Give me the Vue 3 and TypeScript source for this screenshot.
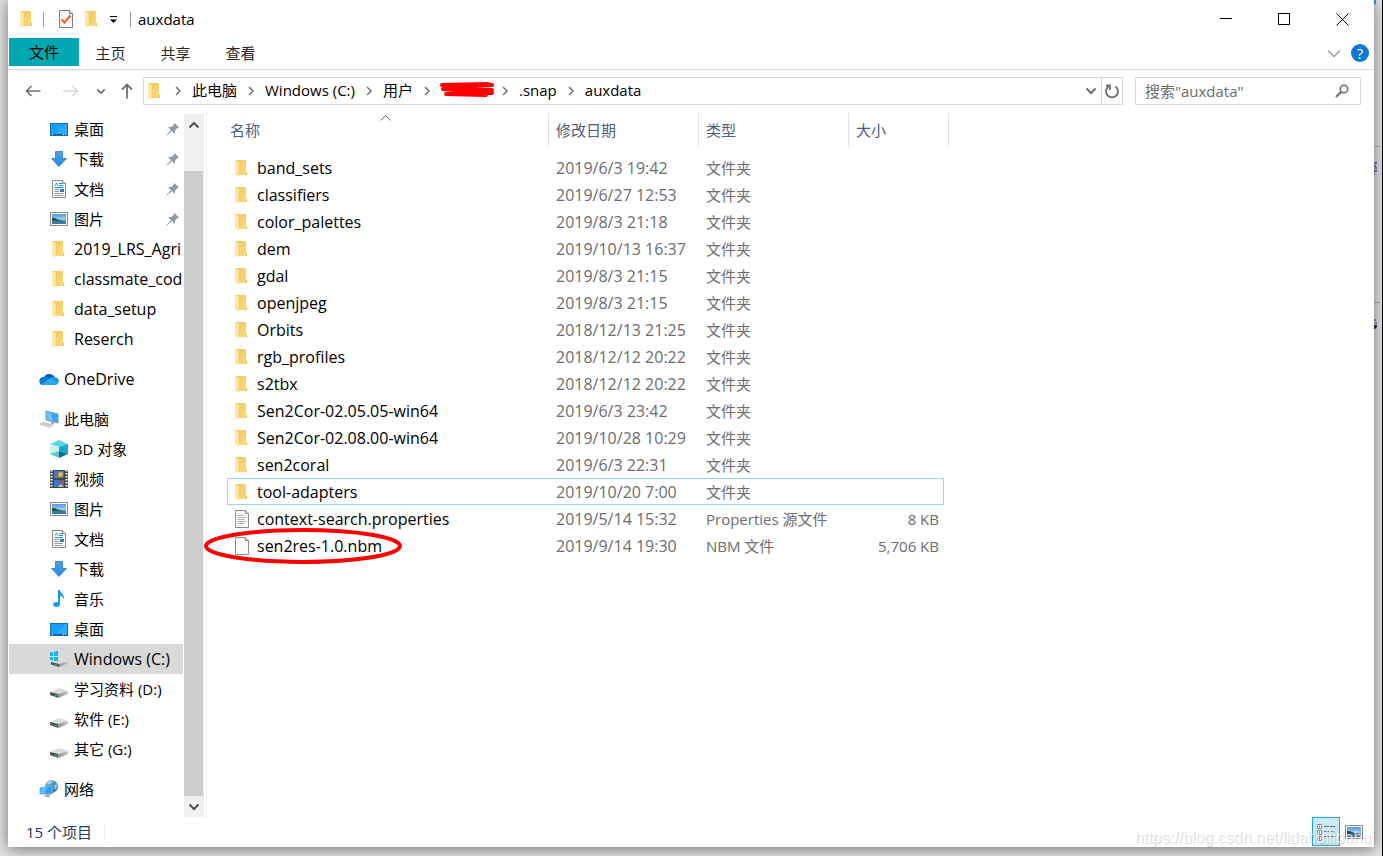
<script setup lang="ts">
import { ref } from 'vue'

interface NavItem {
  label: string
  icon: string
  pinned?: boolean
  active?: boolean
}

interface NavGroup {
  root?: NavItem
  items: NavItem[]
}

interface FileRow {
  name: string
  icon: string
  date: string
  type: string
  size?: string
  focused?: boolean
  circled?: boolean
}

const query = ref('')

const tabs = ['主页', '共享', '查看']

const crumbs = ['此电脑', 'Windows (C:)', '用户', '', '.snap', 'auxdata']

const groups: NavGroup[] = [
  {
    items: [
      { label: '桌面', icon: 'desktop', pinned: true },
      { label: '下载', icon: 'download', pinned: true },
      { label: '文档', icon: 'document', pinned: true },
      { label: '图片', icon: 'picture', pinned: true },
      { label: '2019_LRS_Agri', icon: 'folder' },
      { label: 'classmate_code', icon: 'folder' },
      { label: 'data_setup', icon: 'folder' },
      { label: 'Reserch', icon: 'folder' },
    ],
  },
  { root: { label: 'OneDrive', icon: 'cloud' }, items: [] },
  {
    root: { label: '此电脑', icon: 'computer' },
    items: [
      { label: '3D 对象', icon: 'cube' },
      { label: '视频', icon: 'video' },
      { label: '图片', icon: 'picture' },
      { label: '文档', icon: 'document' },
      { label: '下载', icon: 'download' },
      { label: '音乐', icon: 'music' },
      { label: '桌面', icon: 'desktop' },
      { label: 'Windows (C:)', icon: 'windrive', active: true },
      { label: '学习资料 (D:)', icon: 'drive' },
      { label: '软件 (E:)', icon: 'drive' },
      { label: '其它 (G:)', icon: 'drive' },
    ],
  },
  { root: { label: '网络', icon: 'network' }, items: [] },
]

// Latin-only labels are set one pixel larger than Chinese ones.
const isLatin = (s: string): boolean => !/[\u4e00-\u9fff]/.test(s)

const folder = (name: string, date: string, focused = false): FileRow => ({
  name,
  date,
  icon: 'folder',
  type: '文件夹',
  focused,
})

const files: FileRow[] = [
  folder('band_sets', '2019/6/3 19:42'),
  folder('classifiers', '2019/6/27 12:53'),
  folder('color_palettes', '2019/8/3 21:18'),
  folder('dem', '2019/10/13 16:37'),
  folder('gdal', '2019/8/3 21:15'),
  folder('openjpeg', '2019/8/3 21:15'),
  folder('Orbits', '2018/12/13 21:25'),
  folder('rgb_profiles', '2018/12/12 20:22'),
  folder('s2tbx', '2018/12/12 20:22'),
  folder('Sen2Cor-02.05.05-win64', '2019/6/3 23:42'),
  folder('Sen2Cor-02.08.00-win64', '2019/10/28 10:29'),
  folder('sen2coral', '2019/6/3 22:31'),
  folder('tool-adapters', '2019/10/20 7:00', true),
  { name: 'context-search.properties', icon: 'textfile', date: '2019/5/14 15:32', type: 'Properties 源文件', size: '8 KB' },
  { name: 'sen2res-1.0.nbm', icon: 'blankfile', date: '2019/9/14 19:30', type: 'NBM 文件', size: '5,706 KB', circled: true },
]
</script>

<template>
  <div class="screen">
    <svg class="defs" aria-hidden="true">
      <defs>
        <linearGradient id="g-folder" x1="0" y1="0" x2="1" y2="1">
          <stop offset="0" stop-color="#efc75c" />
          <stop offset="1" stop-color="#fbdb80" />
        </linearGradient>
        <linearGradient id="g-sky" x1="0" y1="0" x2="0" y2="1">
          <stop offset="0" stop-color="#4f9be8" />
          <stop offset="1" stop-color="#e4f3fb" />
        </linearGradient>
        <linearGradient id="g-drive" x1="0" y1="0" x2="1" y2="0">
          <stop offset="0" stop-color="#8d8f91" />
          <stop offset="1" stop-color="#c9cbcd" />
        </linearGradient>
        <linearGradient id="g-arrow" x1="0" y1="0" x2="0" y2="1">
          <stop offset="0" stop-color="#4ba2e8" />
          <stop offset="1" stop-color="#2487dc" />
        </linearGradient>
        <linearGradient id="g-globe" x1="0" y1="0" x2="1" y2="1">
          <stop offset="0" stop-color="#7fc0de" />
          <stop offset="1" stop-color="#256f9e" />
        </linearGradient>

        <symbol id="i-folder" viewBox="0 0 18 18">
          <path d="M3 1h10v12h1v3H3z" fill="url(#g-folder)" />
          <path d="M13 12.500l1 .5v3h-1z" fill="#e9c35d" />
          <path d="M2 1l4 2v13l-1.500 1.500L2 15.500z" fill="#ffe8a6" />
          <path d="M6 3v13" stroke="#efcb70" stroke-width=".6" />
        </symbol>
        <symbol id="i-desktop" viewBox="0 0 18 18">
          <rect x=".5" y="3.500" width="17" height="12" fill="#18a0fb" stroke="#0f6db5" />
          <path d="M6 14L16 4h1v10z" fill="#3fb2ff" opacity=".6" />
          <path d="M1 14.500h16" stroke="#0a5c9e" />
          <path d="M2 14.500h1M13 14.500h1M15 14.500h1" stroke="#fff" />
        </symbol>
        <symbol id="i-download" viewBox="0 0 18 18">
          <path d="M5.500 1.500h7v7h4L9 16.500 1.500 8.500h4z" fill="url(#g-arrow)" stroke="#2b7cc4" stroke-width=".8" />
        </symbol>
        <symbol id="i-document" viewBox="0 0 18 18">
          <path d="M2.500.5h10l3 3v14h-13z" fill="#fff" stroke="#8a8a8a" />
          <path d="M12.500.5v3h3" fill="#e8e8e8" stroke="#8a8a8a" />
          <path d="M5 5.500l1.500-2.500L8 5.500M9 3.500h3M9 5.500h4M4.500 7.500H13" fill="none" stroke="#1f8fdc" />
          <path d="M4.500 9.500H9M4.500 11.500H9M4.500 13.500H13M4.500 15.500H13" stroke="#9a9a9a" />
          <rect x="10" y="9" width="4" height="3" fill="#2e7fc0" />
        </symbol>
        <symbol id="i-picture" viewBox="0 0 18 18">
          <rect x=".5" y="2.500" width="17" height="13" fill="#fff" stroke="#8d8d8d" />
          <rect x="2" y="4" width="14" height="10" fill="url(#g-sky)" />
          <path d="M2 8c3-1 4 1 6 1.500s5 1 8 1V12H2z" fill="#376f52" />
          <path d="M2 11.500c5-1 9 0 14-.5v3H2z" fill="#3c78a8" />
          <path d="M2 8l3 .5 4 2H2z" fill="#244c40" />
        </symbol>
        <symbol id="i-cloud" viewBox="0 0 20 20">
          <path d="M5 8a6 5.500 0 0 1 10.500-.5L15 12H5z" fill="#0a5cb4" />
          <path d="M1 14.500C-1 11 1.500 7.500 5 8c2-.8 4 0 5.500 1.500L6 16H4c-1.500 0-2.500-.5-3-1.500z" fill="#0f78d4" />
          <path d="M10 9.500c1.500-2 4-2.500 6-1 3 0 4.500 2.500 3.500 5z" fill="#1490df" />
          <path d="M2 15.500L10 10c1-.6 2-.5 3 0l6.500 3.500c-.3 1.600-1.500 2.500-3.500 2.500H4c-.8 0-1.500-.2-2-.5z" fill="#28a8ea" />
        </symbol>
        <symbol id="i-computer" viewBox="0 0 20 20">
          <path d="M7 2l12 3v9L7 11z" fill="#3aa5ee" stroke="#8296a5" />
          <path d="M7.500 2.700l4.500 1.100 2 8.400-6.500-1.600z" fill="#69c2fa" />
          <path d="M12 13l3 .8v1.700l-3-.8z" fill="#9aa3aa" />
          <path d="M1 15l3-1.500 10 2.500-3 2.500z" fill="#dfe3e6" stroke="#a9b1b7" stroke-width=".7" />
          <path d="M3.500 15l8 2M5 14.300l7 2" stroke="#b9c0c5" stroke-width=".6" />
        </symbol>
        <symbol id="i-cube" viewBox="0 0 18 18">
          <path d="M0 4l9-4 9 4-9 3z" fill="#5fd5e2" />
          <path d="M0 4l9 3v5l-9 2z" fill="#c9f3f2" />
          <path d="M0 14l9-3v7z" fill="#5cc7cf" />
          <path d="M9 7l9-3v10l-9-3z" fill="#16a9cc" />
          <path d="M9 11l9 3-9 4z" fill="#0d6f86" />
        </symbol>
        <symbol id="i-video" viewBox="0 0 18 18">
          <rect width="18" height="18" fill="#454545" />
          <path d="M1.500 0v18M16.500 0v18" stroke="#fff" stroke-width="2" stroke-dasharray="1.500 1.500" />
          <rect x="4" y="1" width="10" height="7.500" fill="#3b78d8" />
          <rect x="4" y="9.500" width="10" height="7.500" fill="#3b78d8" />
          <circle cx="10.500" cy="4.500" r="2.500" fill="#f3b61f" />
          <circle cx="6.500" cy="7" r="1.500" fill="#d94b9b" />
          <path d="M5 8.500l3-2 5 2z" fill="#49a942" />
          <circle cx="11" cy="11" r="1.800" fill="#d63a2e" />
          <path d="M8 17l3-3 2 3z" fill="#f5c93c" />
          <path d="M4 9h10" stroke="#2a2a2a" />
        </symbol>
        <symbol id="i-music" viewBox="0 0 18 18">
          <ellipse cx="6.500" cy="14.500" rx="3.300" ry="2.500" fill="#0f9bf3" />
          <path d="M8 0h2c0 3.500 5 4 4 9.500-.8-2.500-2-3.500-4-4V15H8z" fill="#0f9bf3" />
        </symbol>
        <symbol id="i-drive" viewBox="0 0 18 18">
          <path d="M0 12l9-4 9 3-8 3.500z" fill="#dcdde0" />
          <path d="M0 12l8.500 2V18L0 15z" fill="#4d5052" />
          <path d="M8.500 14L18 11v3l-9.500 4z" fill="url(#g-drive)" />
          <path d="M5 15l2 .6" stroke="#37d046" stroke-width="1.200" />
        </symbol>
        <symbol id="i-windrive" viewBox="0 0 18 18">
          <path d="M1 12l9-4 8 3-8 3z" fill="#dcdde0" />
          <path d="M1 12l8 2v3l-8-2.500z" fill="#4d5052" />
          <path d="M9 14l9-3v2.500L9 17z" fill="url(#g-drive)" />
          <path d="M5 14.500l2 .5" stroke="#37d046" stroke-width="1.200" />
          <path d="M0 2.500l3-.5v4H0zM4 1.800L8 1v5H4zM0 7h3v3.500L0 10zM4 7h4v4.500l-4-.8z" fill="#12b5ee" />
        </symbol>
        <symbol id="i-network" viewBox="0 0 20 20">
          <circle cx="12.500" cy="7.500" r="6.500" fill="url(#g-globe)" />
          <path d="M8 4c2-2 4-2.500 6-2L12 4.500 9 5.500zM15 6l3-.5c.5 2-.5 4-2 5z" fill="#b5dcec" opacity=".8" />
          <path d="M1 9l12-2v8L1 15z" fill="#2f9fee" stroke="#5fb0e6" />
          <path d="M1.500 9.500l7-1.200-3 6.200h-4z" fill="#5dbcf9" />
          <path d="M6 15.500h4l1.500 1.500-2 1.500-4-1z" fill="#aab1b6" />
        </symbol>
        <symbol id="i-blankfile" viewBox="0 0 18 18">
          <path d="M2.500.5h10l3 3v14h-13z" fill="#fafafa" stroke="#8c8c8c" />
          <path d="M12.500.5v3h3" fill="#e6e6e6" stroke="#8c8c8c" />
        </symbol>
        <symbol id="i-textfile" viewBox="0 0 18 18">
          <path d="M2.500.5h10l3 3v14h-13z" fill="#fafafa" stroke="#8c8c8c" />
          <path d="M12.500.5v3h3" fill="#e6e6e6" stroke="#8c8c8c" />
          <path d="M4.500 5.500H11M4.500 7.500h9M4.500 9.500h7M4.500 11.500h9M4.500 13.500h7" stroke="#b0b0b0" />
        </symbol>
        <symbol id="i-check" viewBox="0 0 18 18">
          <path d="M2.500.5h10l3 3v14h-13z" fill="#f6f6f6" stroke="#7d7d7d" />
          <path d="M12.500.5v3h3" fill="#e6e6e6" stroke="#7d7d7d" />
          <path d="M4.500 9.500l3 3 6-7" fill="none" stroke="#f0621f" stroke-width="2" />
        </symbol>
        <symbol id="i-pin" viewBox="0 0 14 14">
          <path d="M8.500 1L13 5.500l-1.500.5-2.500 2.500L9 12 6 9 1 13.500.5 13 5 8 2 5l3.500 0L8 2.500z" fill="#8e9ba6" />
        </symbol>
        <symbol id="i-right" viewBox="0 0 8 10">
          <path d="M2 1l4 4-4 4" fill="none" stroke="#757575" stroke-width="1.500" />
        </symbol>
        <symbol id="i-down" viewBox="0 0 12 8">
          <path d="M1.500 1.500L6 6l4.500-4.500" fill="none" stroke="currentColor" stroke-width="2" />
        </symbol>
      </defs>
    </svg>

    <svg class="backdrop" viewBox="0 0 9 340" aria-hidden="true">
      <path d="M0 0h2v3L1 5H0z" fill="#2f7fd6" />
      <path d="M0 146.500h6M0 302.500h6" stroke="#8d8d8d" />
      <path d="M0 163h3M0 166h2M1 168h2M0 171h3M0 174h1M0 320h2M1 323h2" stroke="#5c5a94" stroke-width="2" />
      <path d="M0 325h3v2l-2 2H0z" fill="#22223c" />
    </svg>

    <main class="window">
      <header class="titlebar">
        <svg class="icon"><use href="#i-folder" /></svg>
        <span class="rule"></span>
        <button class="quick check" type="button" aria-label="属性"><svg class="icon"><use href="#i-check" /></svg></button>
        <button class="quick" type="button" aria-label="新建文件夹"><svg class="icon"><use href="#i-folder" /></svg></button>
        <button class="quick more" type="button" aria-label="自定义快速访问工具栏">
          <svg width="7" height="8" viewBox="0 0 7 8"><path d="M0 .5h7" stroke="#000" /><path d="M0 3.500h7L3.500 7z" /></svg>
        </button>
        <span class="rule"></span>
        <h1>auxdata</h1>
        <div class="controls">
          <button type="button" aria-label="最小化"><svg viewBox="0 0 13 13"><path d="M0 5.500h12" /></svg></button>
          <button type="button" aria-label="最大化"><svg viewBox="0 0 13 13"><path d="M.5.5h11v11H.5z" /></svg></button>
          <button type="button" aria-label="关闭"><svg viewBox="0 0 13 13"><path d="M.5.5l12 12M12.500.5l-12 12" /></svg></button>
        </div>
      </header>

      <nav class="ribbon" aria-label="功能区">
        <button class="tab file" type="button">文件</button>
        <button v-for="t in tabs" :key="t" class="tab" type="button">{{ t }}</button>
        <button class="expand" type="button" aria-label="展开功能区">
          <svg width="14" height="9" viewBox="0 0 14 9"><path d="M1 1.500L7 7.500l6-6" fill="none" stroke="#9a9a9a" stroke-width="1.300" /></svg>
        </button>
        <button class="help" type="button" aria-label="帮助">?</button>
      </nav>

      <div class="addressbar">
        <div class="history">
          <button type="button" aria-label="后退">
            <svg width="16" height="12" viewBox="0 0 16 12"><path d="M15.500 6H1.500M6.500 1l-5 5 5 5" fill="none" stroke="#6e6e6e" stroke-width="1.600" /></svg>
          </button>
          <button type="button" aria-label="前进" disabled>
            <svg width="16" height="12" viewBox="0 0 16 12"><path d="M0 6h14.500M9.500 1l5 5-5 5" fill="none" stroke="#d9d9d9" stroke-width="1.600" /></svg>
          </button>
          <button class="recent" type="button" aria-label="最近浏览的位置">
            <svg width="10" height="7"><use href="#i-down" /></svg>
          </button>
          <button class="up" type="button" aria-label="上移">
            <svg width="12" height="16" viewBox="0 0 12 16"><path d="M6 15.500V1.500M1 6.500l5-5 5 5" fill="none" stroke="#6e6e6e" stroke-width="1.800" /></svg>
          </button>
        </div>
        <div class="path">
          <svg class="icon"><use href="#i-folder" /></svg>
          <template v-for="(c, i) in crumbs" :key="i">
            <svg class="sep" aria-hidden="true"><use href="#i-right" /></svg>
            <a v-if="c" class="crumb" href="#">{{ c }}</a>
            <svg v-else class="scribble" viewBox="0 0 56 16" aria-label="已涂抹">
              <path d="M3 3l45-1 5 1-48 3 48 2-49-1 49 4-46 1 40 1" fill="none" stroke="#f00" stroke-width="4" stroke-linecap="round" stroke-linejoin="round" />
            </svg>
          </template>
          <button class="drop" type="button" aria-label="以前的位置"><svg width="12" height="8"><use href="#i-down" /></svg></button>
          <button class="refresh" type="button" aria-label="刷新">
            <svg width="16" height="16" viewBox="0 0 16 16"><path d="M4.500 3.500A6 6 0 1 0 11.500 3.500M2 2.500h4V7" fill="none" stroke="#6e6e6e" stroke-width="1.800" /></svg>
          </button>
        </div>
        <label class="search">
          <input v-model="query" type="text" placeholder="搜索&quot;auxdata&quot;" aria-label="搜索 auxdata" />
          <svg width="14" height="14" viewBox="0 0 14 14" aria-hidden="true"><circle cx="9" cy="5" r="3.800" fill="none" stroke="#6e6e6e" stroke-width="1.600" /><path d="M6.500 7.500L1 13" stroke="#6e6e6e" stroke-width="2.200" /></svg>
        </label>
      </div>

      <div class="content">
        <nav class="tree" aria-label="导航窗格">
          <ul v-for="(g, gi) in groups" :key="gi" class="group">
            <li v-if="g.root">
              <a class="node root" :class="{ latin: isLatin(g.root.label) }" href="#"><svg><use :href="'#i-' + g.root.icon" /></svg><span>{{ g.root.label }}</span></a>
            </li>
            <li v-for="n in g.items" :key="n.label">
              <a class="node" :class="{ active: n.active, latin: isLatin(n.label) }" href="#">
                <svg class="icon"><use :href="'#i-' + n.icon" /></svg>
                <span>{{ n.label }}</span>
                <svg v-if="n.pinned" class="pin"><use href="#i-pin" /></svg>
              </a>
            </li>
          </ul>
        </nav>
        <div class="scrollbar">
          <button class="upward" type="button" aria-label="向上滚动"><svg width="12" height="8"><use href="#i-down" /></svg></button>
          <div class="thumb"></div>
          <button type="button" aria-label="向下滚动"><svg width="12" height="8"><use href="#i-down" /></svg></button>
        </div>

        <section class="pane">
          <table>
            <colgroup>
              <col class="c-name" /><col class="c-date" /><col class="c-type" /><col class="c-size" /><col class="c-end" />
            </colgroup>
            <thead>
              <tr>
                <th class="sorted" scope="col">
                  名称
                  <svg width="11" height="6" viewBox="0 0 11 6"><path d="M.5 5.500l5-5 5 5" fill="none" stroke="#6e6e6e" /></svg>
                </th>
                <th scope="col">修改日期</th>
                <th scope="col">类型</th>
                <th scope="col" colspan="2">大小</th>
              </tr>
            </thead>
            <tbody>
              <tr v-for="f in files" :key="f.name" :class="{ focused: f.focused }">
                <td class="name latin">
                  <div class="entry"><svg class="icon"><use :href="'#i-' + f.icon" /></svg>{{ f.name }}</div>
                  <svg v-if="f.circled" class="circle" viewBox="0 0 198 38" aria-hidden="true"><ellipse cx="99" cy="19" rx="97" ry="16" fill="none" stroke="#f00" stroke-width="4" /></svg>
                </td>
                <td class="latin">{{ f.date }}</td>
                <td>{{ f.type }}</td>
                <td class="size">{{ f.size }}</td>
              </tr>
            </tbody>
          </table>
        </section>
      </div>

      <footer class="status">
        <span class="count">15 个项目</span>
        <div class="views">
          <button class="on" type="button" aria-label="详细信息">
            <svg class="icon" viewBox="0 0 18 18">
              <path d="M.5 1.500h4v4h-4zM.5 7.500h4v4h-4zM.5 13.500h4v4h-4z" fill="#fff" stroke="#8d8d8d" />
              <path d="M2 3.500h1" stroke="#2a6fc0" stroke-width="2" /><path d="M2 9.500h1" stroke="#a5611e" stroke-width="2" /><path d="M2 15.500h1" stroke="#c8321e" stroke-width="2" />
              <path d="M7 3.500h5M13 3.500h5M7 8.500h5M13 8.500h5M7 13.500h5M13 13.500h5" stroke="#6b6b6b" />
            </svg>
          </button>
          <button type="button" aria-label="大图标"><svg class="icon"><use href="#i-picture" /></svg></button>
        </div>
      </footer>
    </main>
    <span class="watermark">https://blog.csdn.net/lidahuilidahui</span>
  </div>
</template>

<style>
body {
  background: #e3e3e3;
}
</style>

<style scoped>
.screen {
  position: relative;
  box-sizing: border-box;
  display: flex;
  min-height: 100vh;
  padding: 0 8px 9px;
  border-right: 1px solid #000;
  background: #e3e3e3;
  overflow: hidden;
  font: 15px/20px "Open Sans", "Noto Sans CJK SC", sans-serif;
  color: #000;
}
.defs {
  position: absolute;
  width: 0;
  height: 0;
}
.backdrop {
  position: absolute;
  z-index: 1;
  top: 0;
  right: -1px;
  width: 9px;
  height: 340px;
}
svg {
  display: block;
  flex: none;
}
.icon {
  width: 18px;
  height: 18px;
}
.latin {
  font-size: 16px;
}
button {
  display: flex;
  align-items: center;
  justify-content: center;
  padding: 0;
  border: 0;
  background: none;
  font: inherit;
  color: inherit;
}
a {
  color: inherit;
  text-decoration: none;
}
.window {
  flex: 1;
  min-width: 0;
  display: flex;
  flex-direction: column;
  background: #fff;
  box-shadow: 0 2px 14px rgba(0, 0, 0, 0.5);
}

.titlebar {
  display: flex;
  align-items: center;
  height: 38px;
  padding-left: 10px;
}
.rule {
  width: 1px;
  height: 15px;
  margin: 0 7px;
  background: #9a9a9a;
}
.quick {
  margin-right: 8px;
}
.quick.check {
  margin-left: 6px;
}
.quick.more {
  margin: 2px 6px 0 1px;
}
.titlebar h1 {
  margin: 0;
  font-size: 15px;
  font-weight: 400;
}
.controls {
  display: flex;
  margin: 0 3px 0 auto;
}
.controls button {
  width: 58px;
  height: 38px;
}
.controls svg {
  width: 13px;
  height: 13px;
  fill: none;
  stroke: #000;
}

.ribbon {
  display: flex;
  height: 31px;
  padding-left: 1px;
  border-bottom: 1px solid #dadbdc;
}
.tab {
  box-sizing: border-box;
  width: 65px;
  height: 30px;
  padding-right: 2px;
  color: #262626;
}
.tab.file {
  width: 70px;
  height: 28px;
  padding-right: 0;
  background: #00a8b1;
  color: #000;
}
.expand {
  width: 20px;
  height: 30px;
  margin-left: auto;
}
.help {
  width: 18px;
  height: 18px;
  margin: 6px 5px 0 7px;
  border-radius: 9px;
  background: #0a78d6;
  color: #fff;
  font-size: 15px;
}

.addressbar {
  display: flex;
  height: 28px;
  padding: 7px 13px 8px 15px;
}
.history {
  display: flex;
  align-items: center;
  width: 120px;
}
.history button {
  width: 20px;
  height: 28px;
  margin-right: 18px;
}
.history .recent {
  width: 14px;
  margin: 0 12px 0 -5px;
  color: #6e6e6e;
}
.history .up {
  width: 14px;
  margin: 0;
}
.path {
  flex: 1;
  min-width: 0;
  box-sizing: border-box;
  display: flex;
  align-items: center;
  padding-left: 2px;
  border: 1px solid #d9d9d9;
}
.sep {
  width: 8px;
  height: 10px;
  margin: 0 10px;
}
.scribble {
  width: 56px;
  height: 16px;
  margin: 0 -4px 2px -2px;
}
.crumb {
  padding-bottom: 2px;
  white-space: nowrap;
}
.drop {
  width: 20px;
  height: 26px;
  margin-left: auto;
  color: #6e6e6e;
}
.refresh {
  width: 21px;
  height: 26px;
  border-left: 1px solid #d9d9d9;
}
.search {
  box-sizing: border-box;
  display: flex;
  align-items: center;
  width: 226px;
  margin-left: 12px;
  padding: 0 11px 0 9px;
  border: 1px solid #d9d9d9;
}
.search input {
  flex: 1;
  min-width: 0;
  padding: 0;
  border: 0;
  outline: 0;
  background: none;
  font: inherit;
}
.search input::placeholder {
  color: #6d6d6d;
}

.content {
  flex: 1;
  display: flex;
}
.tree {
  width: 174px;
  padding: 1px 0 12px 1px;
  overflow: hidden;
}
.group {
  margin: 0 0 10px;
  padding: 0;
  list-style: none;
}
.group:last-child {
  margin: 0;
}
.node {
  display: flex;
  align-items: center;
  gap: 6px;
  height: 30px;
  padding-left: 41px;
  white-space: nowrap;
}
.node span {
  flex: 1;
  min-width: 0;
  overflow: hidden;
}
.node.root {
  gap: 5px;
  padding-left: 30px;
}
.node.root svg {
  width: 20px;
  height: 20px;
}
.node.active {
  background: #d9d9d9;
}
.pin {
  width: 14px;
  height: 14px;
  margin-right: 3px;
}
.scrollbar {
  display: flex;
  flex-direction: column;
  width: 20px;
  margin: 1px 2px 0 1px;
  background: #f0f0f0;
  color: #505050;
}
.scrollbar button {
  width: 19px;
  height: 21px;
}
.scrollbar .upward svg {
  transform: rotate(180deg);
}
.thumb {
  flex: 1;
  width: 19px;
  margin-top: 36px;
  background: #cdcdcd;
}
.pane {
  flex: 1;
  min-width: 0;
  padding-left: 20px;
  border-left: 1px solid #efefef;
}

table {
  table-layout: fixed;
  width: 722px;
  border-collapse: separate;
  border-spacing: 0;
}
.c-name {
  width: 322px;
}
.c-date,
.c-type {
  width: 150px;
}
.c-size {
  width: 95px;
}
.c-end {
  width: 5px;
}
th {
  position: relative;
  height: 34px;
  padding: 0 0 0 7px;
  border-right: 1px solid #e2e2e2;
  font-weight: 400;
  text-align: left;
  color: #4c607a;
}
th.sorted {
  padding-left: 3px;
}
th.sorted svg {
  position: absolute;
  top: 2px;
  left: 50%;
  margin-left: -8px;
}
tbody::before {
  content: "";
  display: block;
  height: 7px;
}
td {
  box-sizing: border-box;
  height: 27px;
  padding: 0 0 0 7px;
  color: #6d6d6d;
  white-space: nowrap;
}
td.name {
  position: relative;
  padding-left: 6px;
  color: #000;
}
.entry {
  display: flex;
  align-items: center;
  gap: 6px;
}
td.size {
  padding: 0 5px 0 0;
  text-align: right;
}
.focused td {
  border: 0 solid #99d1ff;
  border-top-width: 1px;
  border-bottom-width: 1px;
}
.focused td.name {
  padding-left: 5px;
  border-left-width: 1px;
}
.focused td.size {
  border-right-width: 1px;
}
.circle {
  position: absolute;
  top: -5px;
  left: -23px;
  width: 198px;
  height: 38px;
}

.status {
  display: flex;
  align-items: center;
  box-sizing: border-box;
  height: 30px;
  padding: 0 6px 1px 18px;
  color: #1e395b;
}
.count {
  padding-right: 12px;
  border-right: 1px solid #f0f0f0;
}
.views {
  display: flex;
  margin-left: auto;
}
.views button {
  box-sizing: border-box;
  width: 28px;
  height: 29px;
}
.views .on {
  border: 1px solid #26a0da;
  background: #cbe8f6;
}
.watermark {
  position: absolute;
  right: 7px;
  bottom: 8px;
  font: 16px/20px "Liberation Sans", sans-serif;
  color: rgba(255, 255, 255, 0.7);
  text-shadow: 1px 1px 1px rgba(0, 0, 0, 0.18);
}
</style>
